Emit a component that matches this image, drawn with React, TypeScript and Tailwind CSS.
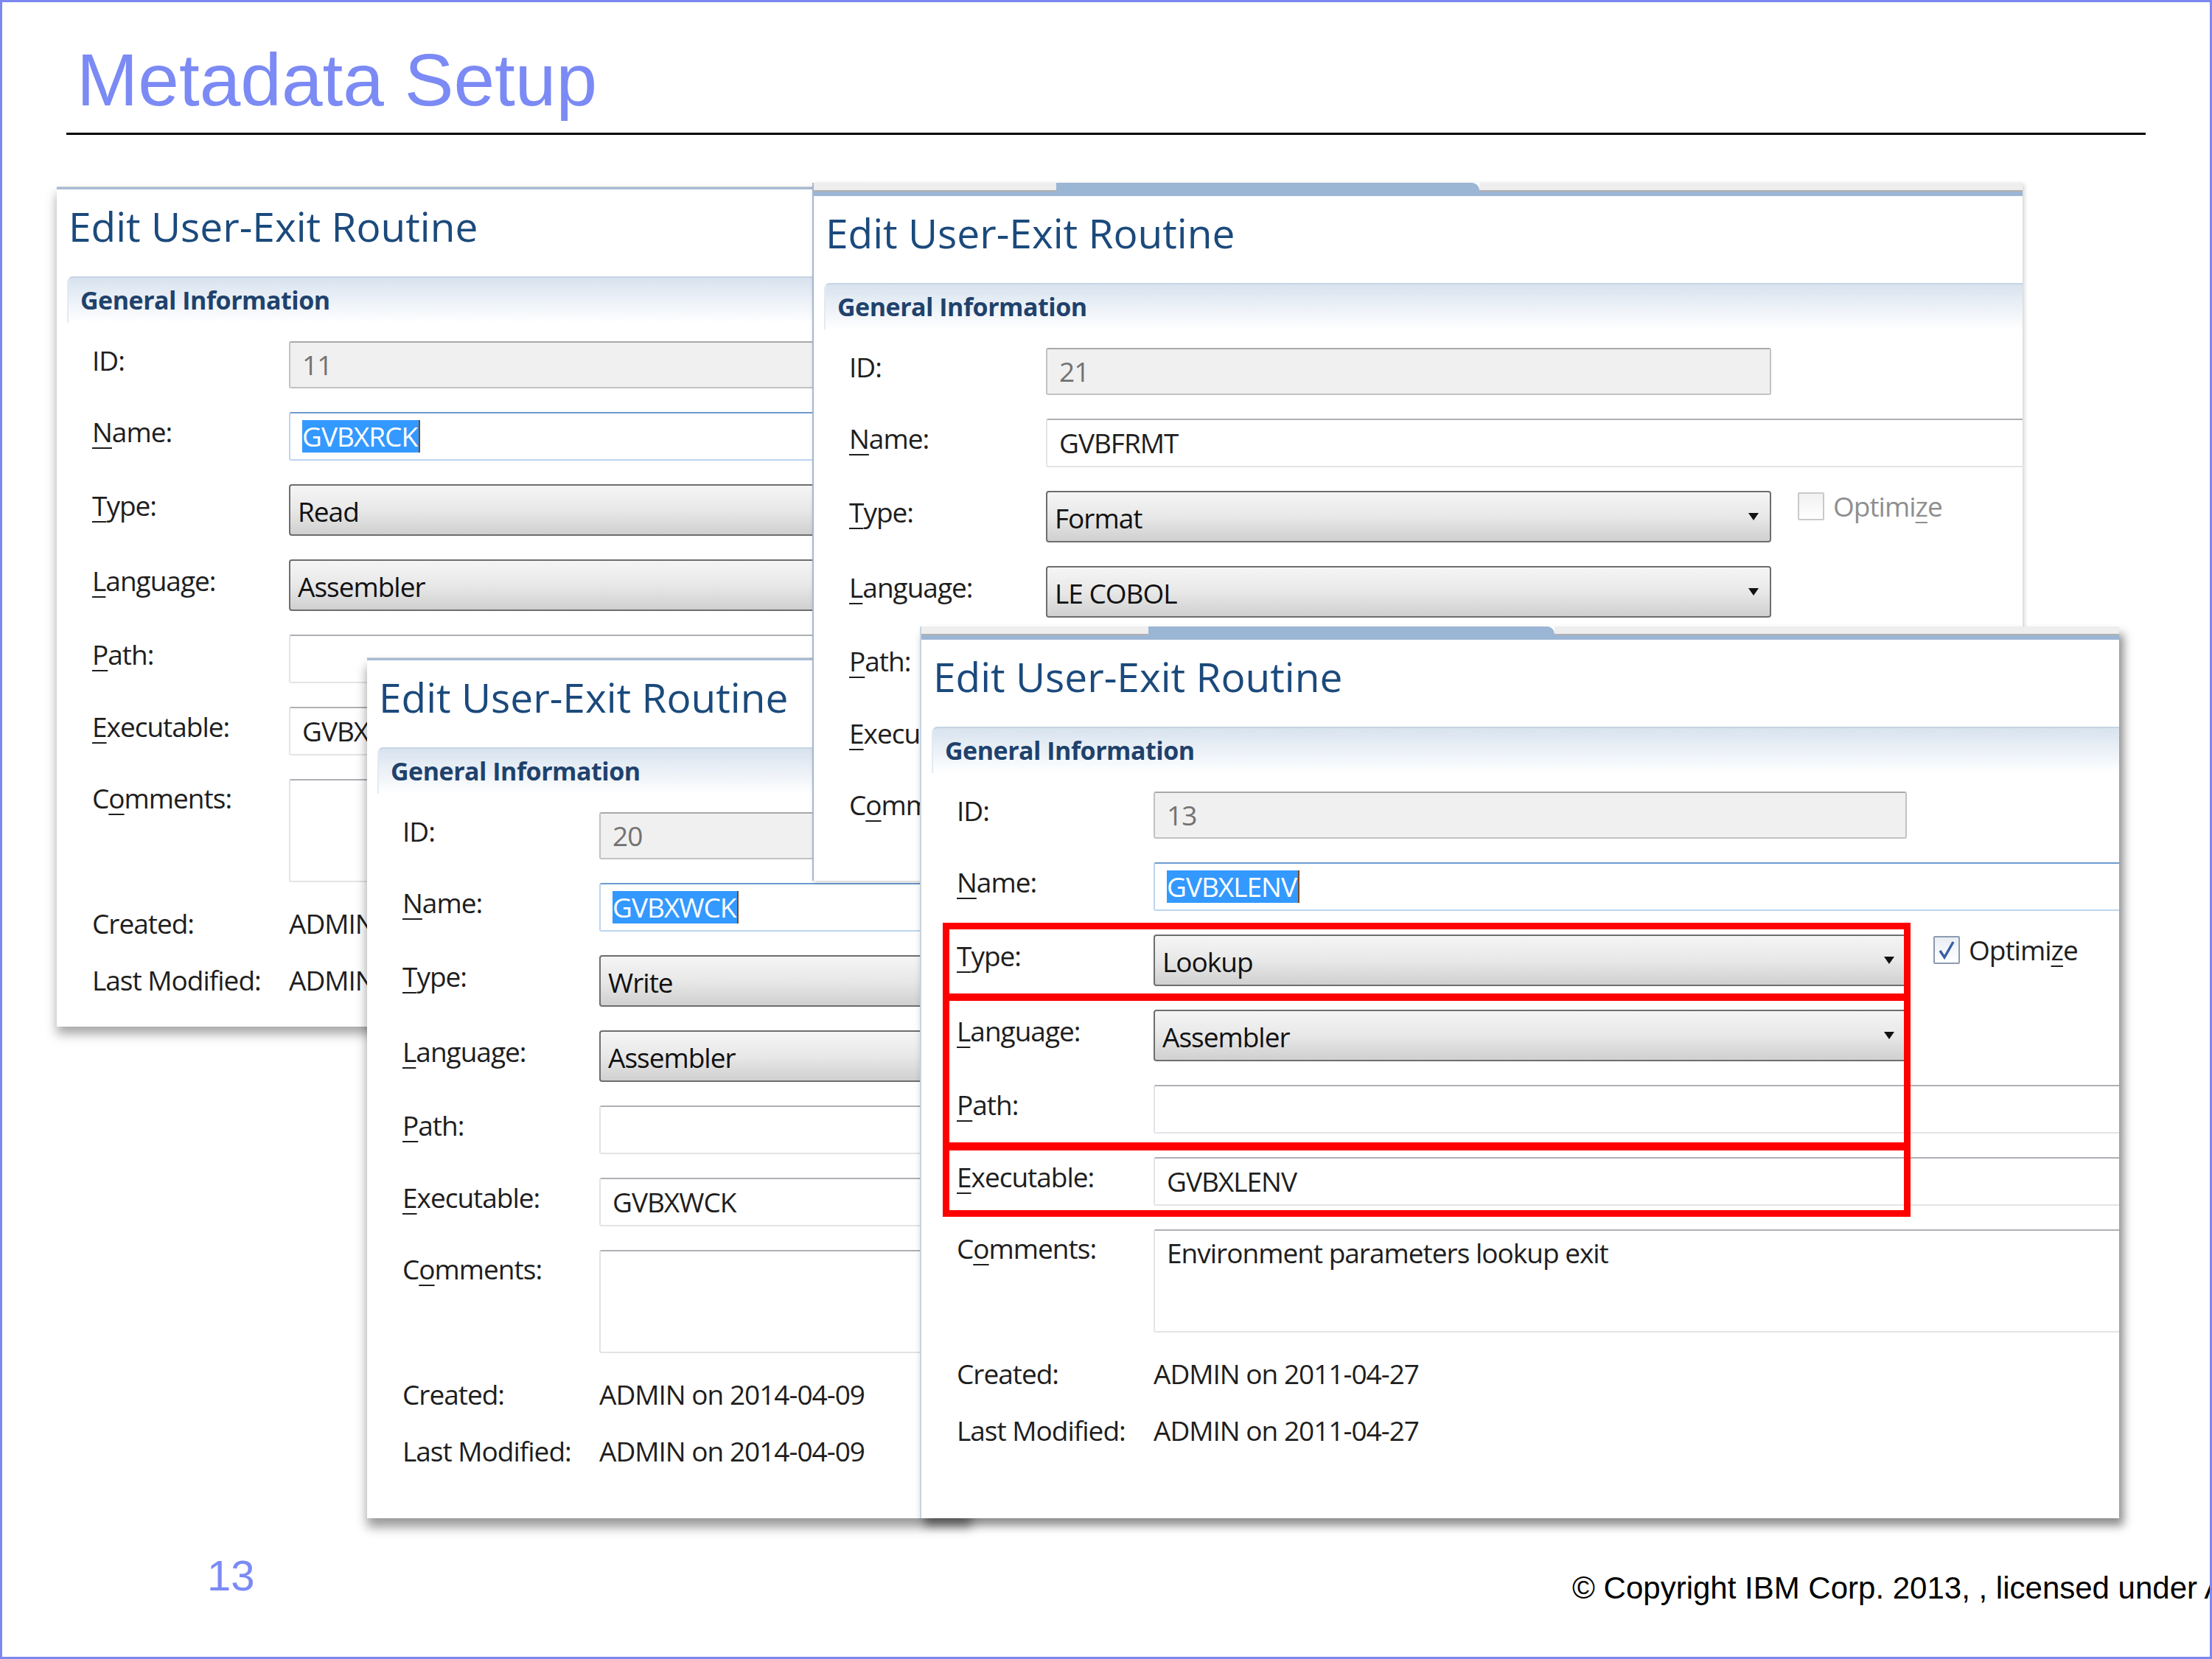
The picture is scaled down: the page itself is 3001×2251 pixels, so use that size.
import React from "react";

type Tabs = { gray: string; blue: string };

type WinData = {
  id: string;
  name: string;
  nameSelected: boolean;
  type: string;
  language: string;
  executable: string;
  comments?: string;
  created: string;
  optimize?: "off" | "on";
  boxW: string;
};

const Mn = ({ text, at }: { text: string; at?: number }) => {
  if (at === undefined) return <>{text}</>;
  return (
    <>
      {text.slice(0, at)}
      <span className="underline decoration-2 underline-offset-[7px]">{text[at]}</span>
      {text.slice(at + 1)}
    </>
  );
};

const Row = ({
  label,
  at,
  h,
  top,
  children,
}: {
  label: string;
  at?: number;
  h: string;
  top?: boolean;
  children: React.ReactNode;
}) => (
  <div className={`flex ${h}`}>
    <div
      className={`w-[267px] shrink-0 flex leading-[40px] whitespace-nowrap ${
        top ? "items-start pt-[6px]" : "items-center pb-[12px]"
      }`}
    >
      <span>
        <Mn text={label} at={at} />
      </span>
    </div>
    <div className="flex-1 min-w-0 flex items-start h-full">{children}</div>
  </div>
);

const Field = ({
  value,
  kind = "plain",
  selected,
  boxW,
  multi,
}: {
  value?: string;
  kind?: "plain" | "disabled" | "focus";
  selected?: boolean;
  boxW?: string;
  multi?: boolean;
}) => {
  const look =
    kind === "disabled"
      ? "bg-[#f0f0f0] border-[#c2c2c2] border-t-[#a9a9a9] text-[#727272]"
      : kind === "focus"
      ? "bg-white border-[#bcd5ef] border-t-[#6c9bcf]"
      : "bg-white border-[#e3e4e7] border-t-[#aeb0b5]";
  return (
    <div
      className={`h-full rounded-[3px] border-2 ${look} ${
        boxW ? `${boxW} shrink-0` : "flex-1 -mr-[6px]"
      } flex ${multi ? "items-start pt-[8px]" : "items-center"} pl-[16px] whitespace-nowrap`}
    >
      {value &&
        (selected ? (
          <span className="bg-[#3399ff] text-white leading-[44px] pr-[2px] border-r-2 border-[#7a4a1e]">
            {value}
          </span>
        ) : (
          <span className="leading-[44px]">{value}</span>
        ))}
    </div>
  );
};

const Combo = ({ value, boxW }: { value: string; boxW: string }) => (
  <div
    className={`${boxW} h-full shrink-0 rounded-[4px] border-2 border-[#6e6e6e] bg-linear-to-b from-[#f5f5f5] via-[#e8e8e8] to-[#d0d0d0] flex items-center justify-between pl-[10px] pr-[14px] text-[#111]`}
  >
    <span className="leading-[40px] pt-[4px]">{value}</span>
    <svg width="16" height="12" viewBox="0 0 16 12">
      <polygon points="1,1 15,1 8,11" fill="#111" />
    </svg>
  </div>
);

const Optimize = ({ checked }: { checked: boolean }) => (
  <div className="flex items-start ml-[36px] gap-[12px] whitespace-nowrap">
    <div
      className={`mt-[2px] w-[36px] h-[38px] shrink-0 rounded-[2px] border-2 flex items-center justify-center ${
        checked
          ? "border-[#8d9bb0] bg-linear-to-b from-[#e9eef4] to-white"
          : "border-[#c9c9c9] bg-linear-to-b from-[#f1f1f1] to-white"
      }`}
    >
      {checked && (
        <svg width="24" height="28" viewBox="0 0 24 28">
          <path d="M3 15 L9 24 L21 3" fill="none" stroke="#3b5fa8" strokeWidth="3.5" />
        </svg>
      )}
    </div>
    <span className={`leading-[40px] mt-[1px] ${checked ? "text-[#1e1e1e]" : "text-[#8f8f8f]"}`}>
      <Mn text="Optimize" at={6} />
    </span>
  </div>
);

const Win = ({
  cls,
  tabs,
  d,
  children,
}: {
  cls: string;
  tabs?: Tabs;
  d: WinData;
  children?: React.ReactNode;
}) => (
  <div className={`absolute bg-white overflow-hidden ${cls}`}>
    {tabs ? (
      <div className="h-[18px] flex flex-col">
        <div className="h-[12px] flex">
          <div className={`${tabs.gray} bg-[#eeeeee] border-b-2 border-[#b0b0b0]`} />
          <div className={`${tabs.blue} bg-[#9bb5d5] rounded-tr-[10px]`} />
          <div className="flex-1 bg-[#eeeeee] border-b-2 border-[#b0b0b0]" />
        </div>
        <div className="h-[6px] bg-[#9bb5d5]" />
      </div>
    ) : (
      <div className="h-[4px] bg-[#a7bbd5] border-t border-[#d4d4d4]" />
    )}

    <div className="h-[76px] pt-[22px] pl-[16px] text-[55px] leading-none text-[#1b4a7c] whitespace-nowrap">
      Edit User-Exit Routine
    </div>

    <div className="mt-[42px] ml-[14px] h-[63px] flex items-center pl-[16px] rounded-tl-[8px] border-t-2 border-l-2 border-t-[#c6d4e4] border-l-[#e3eaf2] bg-linear-to-b from-[#d8e3ef] to-white text-[34px] font-bold tracking-[-0.5px] text-[#1f426c] whitespace-nowrap">
      General Information
    </div>

    <div className="mt-[25px] pl-[48px] flex flex-col gap-[32px] text-[37px] tracking-[-1px] text-[#1e1e1e]">
      <Row label="ID:" h="h-[64px]">
        <Field value={d.id} kind="disabled" boxW={d.boxW} />
      </Row>
      <Row label="Name:" at={0} h="h-[66px]">
        <Field value={d.name} kind={d.nameSelected ? "focus" : "plain"} selected={d.nameSelected} />
      </Row>
      <Row label="Type:" at={0} h="h-[70px]">
        <Combo value={d.type} boxW={d.boxW} />
        {d.optimize && <Optimize checked={d.optimize === "on"} />}
      </Row>
      <Row label="Language:" at={0} h="h-[70px]">
        <Combo value={d.language} boxW={d.boxW} />
      </Row>
      <Row label="Path:" at={0} h="h-[66px]">
        <Field />
      </Row>
      <Row label="Executable:" at={0} h="h-[66px]">
        <Field value={d.executable} />
      </Row>
      <Row label="Comments:" at={1} h="h-[140px]" top>
        <Field value={d.comments} multi />
      </Row>
      <div className="mt-[4px] flex flex-col gap-[37px]">
        <div className="h-[40px] flex items-center whitespace-nowrap leading-[40px]">
          <span className="w-[267px] shrink-0">Created:</span>
          <span>{d.created}</span>
        </div>
        <div className="h-[40px] flex items-center whitespace-nowrap leading-[40px]">
          <span className="w-[267px] shrink-0">Last Modified:</span>
          <span>{d.created}</span>
        </div>
      </div>
    </div>
    {children}
  </div>
);

export default function App() {
  return (
    <div className="w-[3001px] h-[2251px] bg-white border-[3px] border-[#7c88f0] overflow-hidden flex flex-col font-['Open_Sans',sans-serif]">
      <div className="pt-[55px] pl-[101px] h-[155px] font-['Liberation_Sans',Arial,sans-serif] text-[100px] leading-none text-[#7b8af4] whitespace-nowrap">
        Metadata Setup
      </div>
      <div className="mt-[22px] ml-[87px] w-[2821px] h-[3px] bg-black shrink-0" />

      <div className="relative h-[1917px] shrink-0">
        <Win
          cls="left-[74px] top-[70px] w-[1100px] h-[1140px] z-10 shadow-[0_10px_14px_rgba(0,0,0,0.35)]"
          d={{
            id: "11",
            name: "GVBXRCK",
            nameSelected: true,
            type: "Read",
            language: "Assembler",
            executable: "GVBXRCK",
            created: "ADMIN on 2014-04-09",
            boxW: "w-[1000px]",
          }}
        />
        <Win
          cls="left-[495px] top-[709px] w-[820px] h-[1168px] z-20 shadow-[0_12px_14px_rgba(0,0,0,0.4)]"
          d={{
            id: "20",
            name: "GVBXWCK",
            nameSelected: true,
            type: "Write",
            language: "Assembler",
            executable: "GVBXWCK",
            created: "ADMIN on 2014-04-09",
            boxW: "w-[1000px]",
          }}
        />
        <Win
          cls="left-[1099px] top-[65px] w-[1642px] h-[947px] z-30 border-l-2 border-[#a4b8d2] shadow-[2px_2px_6px_rgba(0,0,0,0.2)]"
          tabs={{ gray: "w-[329px]", blue: "w-[574px]" }}
          d={{
            id: "21",
            name: "GVBFRMT",
            nameSelected: false,
            type: "Format",
            language: "LE COBOL",
            executable: "GVBFRMT",
            created: "ADMIN on 2011-04-27",
            optimize: "off",
            boxW: "w-[984px]",
          }}
        />
        <Win
          cls="left-[1245px] top-[667px] w-[1627px] h-[1210px] z-40 border-l-2 border-[#c9d3df] shadow-[6px_10px_12px_rgba(0,0,0,0.45)]"
          tabs={{ gray: "w-[308px]", blue: "w-[551px]" }}
          d={{
            id: "13",
            name: "GVBXLENV",
            nameSelected: true,
            type: "Lookup",
            language: "Assembler",
            executable: "GVBXLENV",
            comments: "Environment parameters lookup exit",
            created: "ADMIN on 2011-04-27",
            optimize: "on",
            boxW: "w-[1022px]",
          }}
        >
          <div className="absolute left-[29px] top-[402px] w-[1313px] h-[106px] border-[9px] border-[#ff0000]" />
          <div className="absolute left-[29px] top-[498px] w-[1313px] h-[213px] border-[9px] border-[#ff0000]" />
          <div className="absolute left-[29px] top-[700px] w-[1313px] h-[101px] border-[9px] border-[#ff0000]" />
        </Win>
      </div>

      <div className="flex items-start font-['Liberation_Sans',Arial,sans-serif] leading-none whitespace-nowrap">
        <div className="ml-[278px] w-[1852px] shrink-0 mt-[9px] text-[58px] text-[#7b8af4]">13</div>
        <div className="mt-[34px] text-[42px] text-black">
          © Copyright IBM Corp. 2013, , licensed under Apache 2.0
        </div>
      </div>
    </div>
  );
}
